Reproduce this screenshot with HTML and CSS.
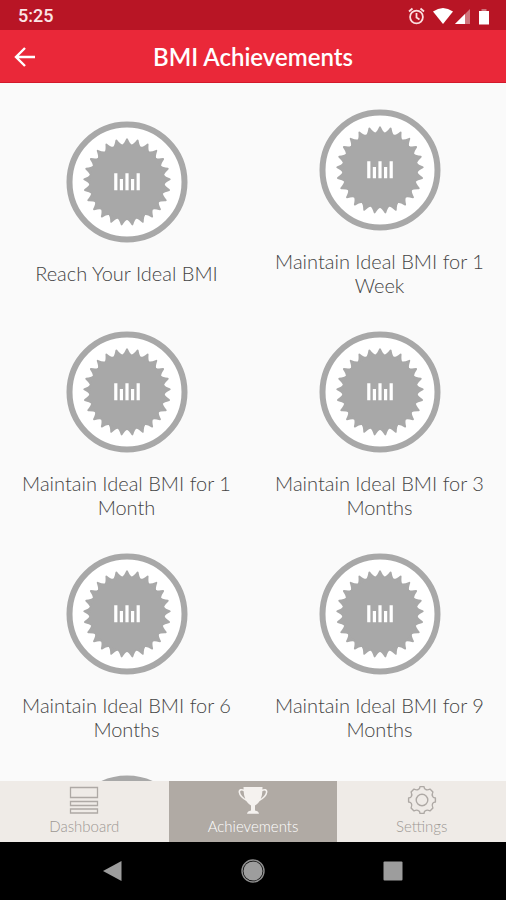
FILE: index.html
```html
<!DOCTYPE html>
<html lang="en">
<head>
<meta charset="utf-8">
<meta name="viewport" content="width=device-width, initial-scale=1">
<title>BMI Achievements</title>
<link rel="stylesheet" href="styles.css">
</head>
<body>
<svg class="defs" aria-hidden="true">
  <defs>
    <path id="tooth" d="M-4.900 -36.500L-4.600 -37.600Q-3 -38.300 -0.800 -43.300Q0 -44.400 0.800 -43.300Q3 -38.300 4.600 -37.600L4.900 -36.500Z"/>
    <g id="teeth">
      <use href="#tooth"/>
      <use href="#tooth" transform="rotate(14.4)"/>
      <use href="#tooth" transform="rotate(28.8)"/>
      <use href="#tooth" transform="rotate(43.2)"/>
      <use href="#tooth" transform="rotate(57.6)"/>
    </g>
    <symbol id="badge" viewBox="-61 -61 122 122">
      <circle r="57.500" fill="#fff" stroke="#a8a8a8" stroke-width="6"/>
      <g fill="#a8a8a8">
        <circle r="37.800"/>
        <use href="#teeth"/>
        <use href="#teeth" transform="rotate(72)"/>
        <use href="#teeth" transform="rotate(144)"/>
        <use href="#teeth" transform="rotate(216)"/>
        <use href="#teeth" transform="rotate(288)"/>
      </g>
      <path d="M-11.200 -8.700V8.300M-5.600 -3V8.300M0 -8.700V8.300M5.600 -3V8.300M11.200 -8.700V8.300" stroke="#fff" stroke-width="3.200"/>
    </symbol>
  </defs>
</svg>
<div class="screen">
  <div class="status">
    <span>5:25</span>
    <svg width="84" height="20" viewBox="0 0 84 20" aria-hidden="true">
      <g fill="none" stroke="#fbdfe0" stroke-width="1.800">
        <circle cx="10.500" cy="11" r="6.400"/>
        <path d="M10.500 7v4.500l3 2M3 5.500l3.500-3M18 5.500l-3.500-3"/>
      </g>
      <path d="M27 5.500Q37 -1.500 47 5.500L37 18Z" fill="#fff"/>
      <path d="M49 18L64 3V18Z" fill="#d0747c"/>
      <path d="M49 18L59 8V18Z" fill="#fff"/>
      <path d="M73 5h10V18.500H73Z" fill="#fff"/>
      <path d="M75.500 3h5v2h-5Z" fill="#d0747c"/>
    </svg>
  </div>
  <header class="bar">
    <button class="back" aria-label="Back">
      <svg width="22" height="22" viewBox="0 0 22 22" fill="none" stroke="#fff" stroke-width="2.400"><path d="M21 11H2.500M11 2L2 11L11 20"/></svg>
    </button>
    <h1>BMI Achievements</h1>
  </header>
  <main class="list">
    <article class="item"><svg class="badge" aria-hidden="true"><use href="#badge"/></svg><p>Reach Your Ideal BMI</p></article>
    <article class="item"><svg class="badge" aria-hidden="true"><use href="#badge"/></svg><p>Maintain Ideal BMI for 1 Week</p></article>
    <article class="item"><svg class="badge" aria-hidden="true"><use href="#badge"/></svg><p>Maintain Ideal BMI for 1 Month</p></article>
    <article class="item"><svg class="badge" aria-hidden="true"><use href="#badge"/></svg><p>Maintain Ideal BMI for 3 Months</p></article>
    <article class="item"><svg class="badge" aria-hidden="true"><use href="#badge"/></svg><p>Maintain Ideal BMI for 6 Months</p></article>
    <article class="item"><svg class="badge" aria-hidden="true"><use href="#badge"/></svg><p>Maintain Ideal BMI for 9 Months</p></article>
    <article class="item"><svg class="badge" aria-hidden="true"><use href="#badge"/></svg></article>
  </main>
  <nav class="tabs">
    <a href="#dashboard">
      <svg width="30" height="30" viewBox="0 0 30 30" fill="none" stroke="#aea9a5" stroke-width="1.300"><path d="M1.500 2.500h27v10h-27ZM1.500 16.500h27v4h-27ZM1.500 24h27v4h-27Z"/></svg>
      <span>Dashboard</span>
    </a>
    <a href="#achievements" class="active" aria-current="page">
      <svg width="30" height="30" viewBox="0 0 30 30"><path d="M5.500 2H24.500C24.500 8 24 13 21 17Q19 19.500 17 20.500V25.500Q20.500 26 21 28.800H9Q9.500 26 13 25.500V20.500Q11 19.500 9 17C6 13 5.500 8 5.500 2Z" fill="#f5f2ef"/><path d="M6.500 5.500Q1.200 3.500 1.300 7Q2 12 9 15.500M23.500 5.500Q28.800 3.500 28.700 7Q28 12 21 15.500" fill="none" stroke="#f5f2ef" stroke-width="1.600"/></svg>
      <span>Achievements</span>
    </a>
    <a href="#settings">
      <svg width="30" height="30" viewBox="-15 -15 30 30" fill="none" stroke="#aea9a5" stroke-width="1.400"><circle r="5.800"/><path d="M-3.600 -10.600Q-2.200 -11 -2 -13.400H2Q2.200 -11 3.600 -10.600Q5.200 -9.600 8 -10.900L10.900 -8Q9.600 -5.200 10.600 -3.600Q11 -2.200 13.400 -2V2Q11 2.200 10.600 3.600Q9.600 5.200 10.900 8L8 10.900Q5.200 9.600 3.600 10.600Q2.200 11 2 13.400H-2Q-2.200 11 -3.600 10.600Q-5.200 9.600 -8 10.900L-10.900 8Q-9.600 5.200 -10.600 3.600Q-11 2.200 -13.400 2V-2Q-11 -2.200 -10.600 -3.600Q-9.600 -5.200 -10.900 -8L-8 -10.900Q-5.200 -9.600 -3.600 -10.600Z" stroke-linejoin="round"/></svg>
      <span>Settings</span>
    </a>
  </nav>
  <div class="system">
    <button aria-label="Back"><svg width="24" height="24" viewBox="0 0 24 24"><path d="M2 12L20.500 2V22Z" fill="#9d9d9d"/></svg></button>
    <button aria-label="Home"><svg width="24" height="24" viewBox="0 0 24 24"><circle cx="12" cy="12" r="11" fill="none" stroke="#8f8f8f" stroke-width="1.400"/><circle cx="12" cy="12" r="9.600" fill="#9d9d9d"/></svg></button>
    <button aria-label="Recent apps"><svg width="24" height="24" viewBox="0 0 24 24"><rect x="2.500" y="2.500" width="19" height="19" rx="1" fill="#9d9d9d"/></svg></button>
  </div>
</div>
</body>
</html>
```
FILE: styles.css
```css
* { box-sizing: border-box; }
body { margin: 0; font-family: Lato, "Liberation Sans", sans-serif; background: #fafafa; }
button { border: 0; padding: 0; background: none; }
svg { display: block; }
.defs { position: absolute; width: 0; height: 0; }
.screen { display: flex; flex-direction: column; height: 100vh; overflow: hidden; }
.status {
  flex: none; display: flex; align-items: center; justify-content: space-between;
  height: 30px; padding: 2px 16px 0 18px;
  background: #b81525; color: #fbe5e6;
  font: 500 18px/28px Roboto, sans-serif;
}
.bar {
  flex: none; display: grid; grid-template-columns: 50px 1fr 50px; align-items: center;
  height: 53px; padding-top: 2px;
  background: #ea2839; border-bottom: 1px solid #d3192b; color: #fff;
}
.back { padding-left: 14px; }
.bar h1 { margin: 0; text-align: center; font-size: 24px; line-height: 32px; font-weight: 600; }
.list {
  flex: 1; min-height: 0; overflow: hidden;
  display: grid; grid-template-columns: 1fr 1fr; grid-auto-rows: 222px;
}
.item {
  display: flex; flex-direction: column; align-items: center; justify-content: center;
  padding: 17px 20px 0; text-align: center;
}
.item:last-child { justify-content: flex-start; padding-top: 26px; }
.badge { width: 122px; height: 122px; flex: none; }
.item p { margin: 18px 0 0; font-size: 20px; line-height: 24px; font-weight: 300; color: #444; }
.tabs { flex: none; display: grid; grid-template-columns: repeat(3, 1fr); height: 61px; background: #efebe7; }
.tabs a {
  display: flex; flex-direction: column; align-items: center; padding-top: 4px;
  color: #9d9894; text-decoration: none; font-size: 15px; line-height: 22px; font-weight: 300;
}
.tabs .active { background: #b0aaa4; color: #fff; }
.system {
  flex: none; display: flex; align-items: center; justify-content: center; gap: 116px;
  height: 58px; background: #000;
}
```
